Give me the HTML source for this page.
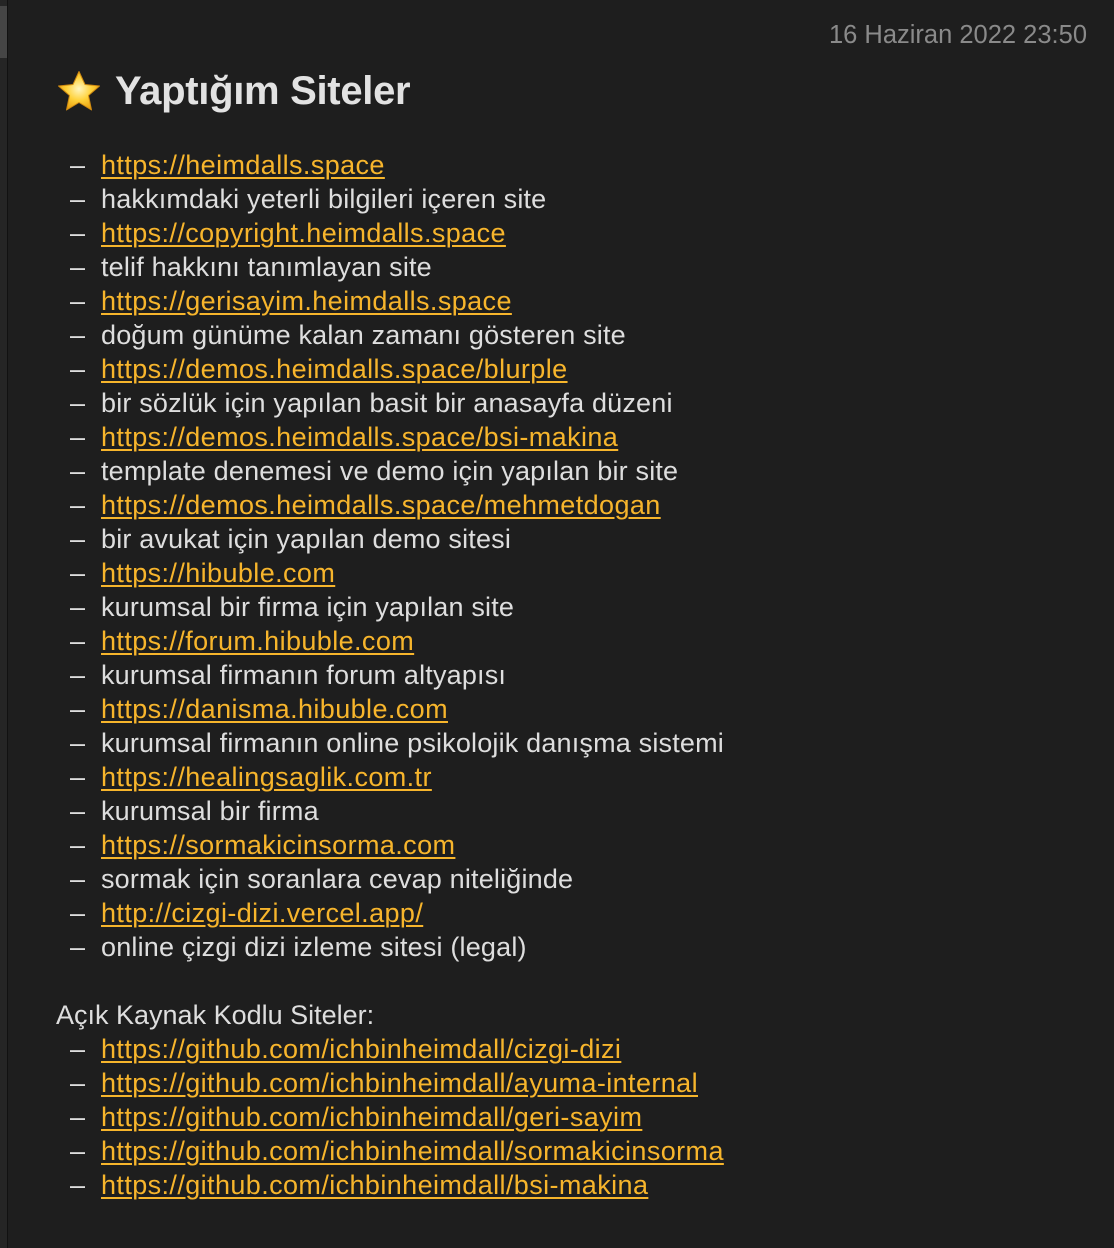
<!DOCTYPE html>
<html><head><meta charset="utf-8"><style>
html,body{margin:0;padding:0;background:#1e1e1e;width:1114px;height:1248px;overflow:hidden}
body{position:relative;font-family:"Liberation Sans","DejaVu Sans",sans-serif;color:#dedede}
.lb{position:absolute;left:0;top:0;width:7px;height:1248px;background:#252525;border-right:1px solid #111}
.thumb{position:absolute;left:0;top:6px;width:7px;height:52px;background:#454545}
.date{position:absolute;right:27px;top:20px;font-size:25.5px;color:#8a8a8a;line-height:30px}
.title{position:absolute;left:115px;top:67px;font-size:40px;font-weight:bold;color:#e2e2e2;line-height:48px;letter-spacing:-0.3px}
.star{position:absolute;left:56px;top:70px}
.l{position:absolute;left:70px;height:34px;line-height:34px;font-size:27px;white-space:nowrap;letter-spacing:0.18px}
.l .d{display:inline-block;width:31px;letter-spacing:0}
a{color:#f7b52c;text-decoration:underline;text-decoration-thickness:2px;text-underline-offset:3px;letter-spacing:0.4px}
.h{position:absolute;left:56px;font-size:27px;line-height:34px}
</style></head><body>
<div class="lb"></div><div class="thumb"></div>
<div class="date">16 Haziran 2022 23:50</div>
<svg class="star" width="46" height="42" viewBox="0 0 46 42"><defs><radialGradient id="g" cx="50%" cy="45%" r="60%"><stop offset="0" stop-color="#fff6c0"/><stop offset="0.5" stop-color="#ffd23a"/><stop offset="1" stop-color="#e79a0a"/></radialGradient></defs><path d="M23 1.5 L29 14.5 L43.5 16 L32.5 25.5 L35.5 40 L23 32.5 L10.5 40 L13.5 25.5 L2.5 16 L17 14.5 Z" fill="url(#g)" stroke="#d08a10" stroke-width="1" stroke-linejoin="round"/></svg>
<div class="title">Yaptığım Siteler</div>

<div class="l" style="top:148px"><span class="d">–</span><a>https://heimdalls.space</a></div>
<div class="l" style="top:182px"><span class="d">–</span>hakkımdaki yeterli bilgileri içeren site</div>
<div class="l" style="top:216px"><span class="d">–</span><a>https://copyright.heimdalls.space</a></div>
<div class="l" style="top:250px"><span class="d">–</span>telif hakkını tanımlayan site</div>
<div class="l" style="top:284px"><span class="d">–</span><a>https://gerisayim.heimdalls.space</a></div>
<div class="l" style="top:318px"><span class="d">–</span>doğum günüme kalan zamanı gösteren site</div>
<div class="l" style="top:352px"><span class="d">–</span><a>https://demos.heimdalls.space/blurple</a></div>
<div class="l" style="top:386px"><span class="d">–</span>bir sözlük için yapılan basit bir anasayfa düzeni</div>
<div class="l" style="top:420px"><span class="d">–</span><a>https://demos.heimdalls.space/bsi-makina</a></div>
<div class="l" style="top:454px"><span class="d">–</span>template denemesi ve demo için yapılan bir site</div>
<div class="l" style="top:488px"><span class="d">–</span><a>https://demos.heimdalls.space/mehmetdogan</a></div>
<div class="l" style="top:522px"><span class="d">–</span>bir avukat için yapılan demo sitesi</div>
<div class="l" style="top:556px"><span class="d">–</span><a>https://hibuble.com</a></div>
<div class="l" style="top:590px"><span class="d">–</span>kurumsal bir firma için yapılan site</div>
<div class="l" style="top:624px"><span class="d">–</span><a>https://forum.hibuble.com</a></div>
<div class="l" style="top:658px"><span class="d">–</span>kurumsal firmanın forum altyapısı</div>
<div class="l" style="top:692px"><span class="d">–</span><a>https://danisma.hibuble.com</a></div>
<div class="l" style="top:726px"><span class="d">–</span>kurumsal firmanın online psikolojik danışma sistemi</div>
<div class="l" style="top:760px"><span class="d">–</span><a>https://healingsaglik.com.tr</a></div>
<div class="l" style="top:794px"><span class="d">–</span>kurumsal bir firma</div>
<div class="l" style="top:828px"><span class="d">–</span><a>https://sormakicinsorma.com</a></div>
<div class="l" style="top:862px"><span class="d">–</span>sormak için soranlara cevap niteliğinde</div>
<div class="l" style="top:896px"><span class="d">–</span><a>http://cizgi-dizi.vercel.app/</a></div>
<div class="l" style="top:930px"><span class="d">–</span>online çizgi dizi izleme sitesi (legal)</div>

<div class="h" style="top:998px">Açık Kaynak Kodlu Siteler:</div>
<div class="l" style="top:1032px"><span class="d">–</span><a>https://github.com/ichbinheimdall/cizgi-dizi</a></div>
<div class="l" style="top:1066px"><span class="d">–</span><a>https://github.com/ichbinheimdall/ayuma-internal</a></div>
<div class="l" style="top:1100px"><span class="d">–</span><a>https://github.com/ichbinheimdall/geri-sayim</a></div>
<div class="l" style="top:1134px"><span class="d">–</span><a>https://github.com/ichbinheimdall/sormakicinsorma</a></div>
<div class="l" style="top:1168px"><span class="d">–</span><a>https://github.com/ichbinheimdall/bsi-makina</a></div>
</body></html>
